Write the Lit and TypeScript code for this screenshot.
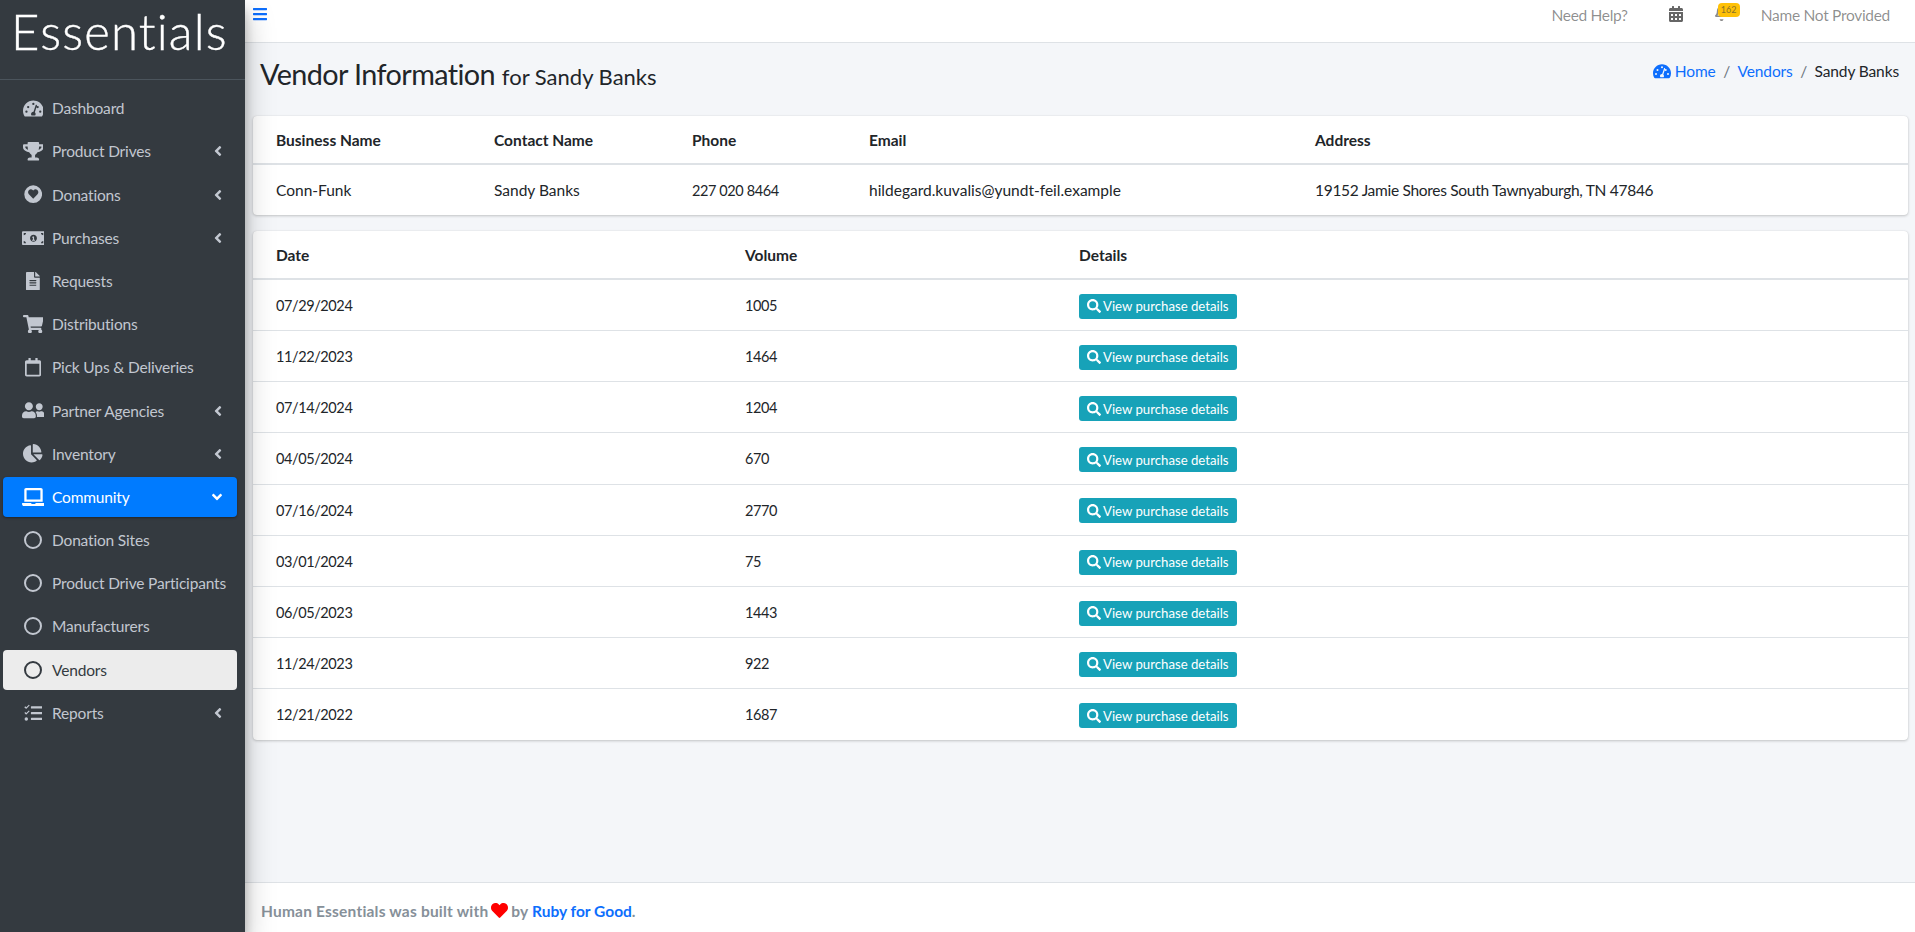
import { LitElement, html, css, svg } from "lit";
import { customElement } from "lit/decorators.js";

const icons: Record<string, any> = {
  gauge: svg`<path fill-rule="evenodd" d="M288 40C129 40 0 169 0 328c0 53 14 102 39 145 6 10 17 15 28 15h442c11 0 22-5 28-15 25-43 39-92 39-145C576 169 447 40 288 40zm0 64a32 32 0 1 1 0 64 32 32 0 0 1 0-64zM96 384a32 32 0 1 1 0-64 32 32 0 0 1 0 64zm48-128a32 32 0 1 1 0-64 32 32 0 0 1 0 64zm247-72-61 184c14 13 22 30 22 50 0 15-5 28-13 40H237c-8-12-13-25-13-40 0-35 28-64 63-64h6l61-184c3-9 13-14 21-11 10 3 15 13 12 25h3zm17 8a32 32 0 1 1 0 64 32 32 0 0 1 0-64zm72 192a32 32 0 1 1 0-64 32 32 0 0 1 0 64z"/>`,
  trophy: svg`<path d="M552 64H448V24c0-13-11-24-24-24H152c-13 0-24 11-24 24v40H24C11 64 0 75 0 88v56c0 36 23 73 62 101 32 23 70 37 110 42 32 53 68 75 68 75v72h-48c-35 0-64 21-64 56v12c0 7 5 12 12 12h296c7 0 12-5 12-12v-12c0-35-29-56-64-56h-48v-72s36-22 68-75c40-5 78-19 110-42 39-28 62-65 62-101V88c0-13-11-24-24-24zM99 193c-24-18-35-37-35-49v-16h64c1 32 6 61 13 85-15-5-29-12-42-20zm413-49c0 17-19 34-35 49-13 8-27 15-42 20 7-24 12-53 13-85h64v16z"/>`,
  heartCircle: svg`<path fill-rule="evenodd" d="M256 8a248 248 0 1 0 0 496 248 248 0 0 0 0-496zm0 372L136 256c-32-34-30-89 6-118 31-26 78-21 106 7l8 9 9-9c28-28 75-33 106-7 35 29 37 84 6 118L256 380z"/>`,
  money: svg`<path fill-rule="evenodd" d="M608 64H32C14 64 0 78 0 96v320c0 18 14 32 32 32h576c18 0 32-14 32-32V96c0-18-14-32-32-32zM48 400v-64c35 0 64 29 64 64H48zm0-224v-64h64c0 35-29 64-64 64zm272 176c-53 0-96-43-96-96s43-96 96-96 96 43 96 96-43 96-96 96zm272 48h-64c0-35 29-64 64-64v64zm0-224c-35 0-64-29-64-64h64v64zM336 296v-80c0-4-4-8-8-8h-14c-5 0-9 1-13 4l-15 10c-4 2-5 7-2 11l9 13c2 4 7 5 11 2l0 0v48h-16c-4 0-8 4-8 8v16c0 4 4 8 8 8h64c4 0 8-4 8-8v-16c0-4-4-8-8-8h-16z"/>`,
  file: svg`<path fill-rule="evenodd" d="M224 136V0H24C11 0 0 11 0 24v464c0 13 11 24 24 24h336c13 0 24-11 24-24V160H248c-13 0-24-11-24-24zm64 236c0 7-5 12-12 12H108c-7 0-12-5-12-12v-8c0-7 5-12 12-12h168c7 0 12 5 12 12v8zm0-64c0 7-5 12-12 12H108c-7 0-12-5-12-12v-8c0-7 5-12 12-12h168c7 0 12 5 12 12v8zm0-72v8c0 7-5 12-12 12H108c-7 0-12-5-12-12v-8c0-7 5-12 12-12h168c7 0 12 5 12 12zm96-114v6H256V0h6c6 0 12 3 17 7l98 98c4 5 7 11 7 17z"/>`,
  cart: svg`<path d="M528 301l47-208c4-15-8-29-23-29H159l-9-45C148 8 138 0 127 0H24C11 0 0 11 0 24v16c0 13 11 24 24 24h70l70 343c-17 10-28 28-28 49 0 31 25 56 56 56s56-25 56-56c0-16-6-30-17-40h210c-11 10-17 24-17 40 0 31 25 56 56 56s56-25 56-56c0-22-13-41-31-50l5-24c4-15-8-29-23-29H218l-7-32h293c11 0 21-8 24-19z"/>`,
  calendarOutline: svg`<path fill-rule="evenodd" d="M400 64h-48V12c0-7-5-12-12-12h-40c-7 0-12 5-12 12v52H160V12c0-7-5-12-12-12h-40c-7 0-12 5-12 12v52H48C21 64 0 85 0 112v352c0 27 21 48 48 48h352c27 0 48-21 48-48V112c0-27-21-48-48-48zm-6 400H54c-3 0-6-3-6-6V160h352v298c0 3-3 6-6 6z"/>`,
  users: svg`<path d="M192 256c62 0 112-50 112-112S254 32 192 32 80 82 80 144s50 112 112 112zm77 32h-8c-21 10-44 16-69 16s-48-6-69-16h-8C52 288 0 340 0 403v29c0 27 22 48 48 48h288c27 0 48-21 48-48v-29c0-63-52-115-115-115zM480 256c53 0 96-43 96-96s-43-96-96-96-96 43-96 96 43 96 96 96zm48 32h-4c-14 5-29 8-44 8s-30-3-44-8h-4c-20 0-39 6-56 15 24 27 40 62 40 100v38c0 3-1 5-1 7h177c27 0 48-21 48-48 0-62-50-112-112-112z"/>`,
  pie: svg`<path d="M528 288H290l158 158c6 6 16 7 22 1 39-37 66-86 73-141 2-10-6-18-15-18zm-16-65C504 104 408 8 289 0c-9-1-17 7-17 16v224h224c9 0 17-8 16-17zM224 288V51c0-10-8-18-18-16C87 51-4 156 0 280c5 129 115 234 243 232 50-1 97-17 135-44 8-6 9-17 2-24L224 288z"/>`,
  laptop: svg`<path fill-rule="evenodd" d="M624 416H381c-1 20-15 32-33 32h-60c-19 0-33-18-33-32H16c-9 0-16 7-16 16v16c0 35 29 64 64 64h512c35 0 64-29 64-64v-16c0-9-7-16-16-16zM576 48c0-26-22-48-48-48H112C86 0 64 22 64 48v336h512V48zm-64 272H128V64h384v256z"/>`,
  tasks: svg`<path d="M139 25c-3-3-8-3-11 0L64 89 41 67c-3-3-8-3-11 0L14 83c-3 3-3 8 0 11l40 40c3 3 8 3 11 0l16-16 75-75c3-3 3-8 0-11l-17-7zm0 160c-3-3-8-3-11 0l-64 64-23-22c-3-3-8-3-11 0l-16 16c-3 3-3 8 0 11l40 40c3 3 8 3 11 0l16-16 75-75c3-3 3-8 0-11l-17-7zM64 368a48 48 0 1 0 0 96 48 48 0 0 0 0-96zm432 16H208c-9 0-16 7-16 16v32c0 9 7 16 16 16h288c9 0 16-7 16-16v-32c0-9-7-16-16-16zm0-320H208c-9 0-16 7-16 16v32c0 9 7 16 16 16h288c9 0 16-7 16-16V80c0-9-7-16-16-16zm0 160H208c-9 0-16 7-16 16v32c0 9 7 16 16 16h288c9 0 16-7 16-16v-32c0-9-7-16-16-16z"/>`,
  calendarFull: svg`<path fill-rule="evenodd" d="M0 464c0 27 21 48 48 48h352c27 0 48-21 48-48V192H0v272zm320-196c0-7 5-12 12-12h40c7 0 12 5 12 12v40c0 7-5 12-12 12h-40c-7 0-12-5-12-12v-40zm0 128c0-7 5-12 12-12h40c7 0 12 5 12 12v40c0 7-5 12-12 12h-40c-7 0-12-5-12-12v-40zM192 268c0-7 5-12 12-12h40c7 0 12 5 12 12v40c0 7-5 12-12 12h-40c-7 0-12-5-12-12v-40zm0 128c0-7 5-12 12-12h40c7 0 12 5 12 12v40c0 7-5 12-12 12h-40c-7 0-12-5-12-12v-40zM64 268c0-7 5-12 12-12h40c7 0 12 5 12 12v40c0 7-5 12-12 12H76c-7 0-12-5-12-12v-40zm0 128c0-7 5-12 12-12h40c7 0 12 5 12 12v40c0 7-5 12-12 12H76c-7 0-12-5-12-12v-40zM400 64h-48V16c0-9-7-16-16-16h-32c-9 0-16 7-16 16v48H160V16c0-9-7-16-16-16h-32c-9 0-16 7-16 16v48H48C21 64 0 85 0 112v48h448v-48c0-27-21-48-48-48z"/>`,
  bell: svg`<path fill-rule="evenodd" d="M439 319c-19-21-55-52-55-154 0-77-54-139-127-155V0h-66v10C118 26 64 88 64 165c0 102-36 133-55 154-6 6-9 13-9 21 0 16 13 32 32 32h384c19 0 32-16 32-32 0-8-3-15-9-21zM85 324c21-28 44-74 44-158v-1c0-62 50-112 95-112s95 50 95 112v1c0 84 23 130 44 158H85zM224 512c35 0 64-29 64-64H160c0 35 29 64 64 64z"/>`,
  search: svg`<path d="M505 443 405 343c-4-4-10-7-17-7h-16c28-35 44-80 44-128C416 93 323 0 208 0S0 93 0 208s93 208 208 208c48 0 93-16 128-44v16c0 7 3 13 7 17l100 100c9 9 24 9 34 0l28-28c9-10 9-25 0-34zM208 336a128 128 0 1 1 0-256 128 128 0 0 1 0 256z"/>`,
  heart: svg`<path d="M462 32c-55-46-136-38-186 14l-20 21-20-21C186-6 105-14 50 32-13 86-16 182 40 240l193 199c13 13 33 13 46 0l193-199c56-58 53-154-10-208z"/>`,
  bars: svg`<path d="M16 132h416c9 0 16-7 16-16V76c0-9-7-16-16-16H16C7 60 0 67 0 76v40c0 9 7 16 16 16zm0 160h416c9 0 16-7 16-16v-40c0-9-7-16-16-16H16c-9 0-16 7-16 16v40c0 9 7 16 16 16zm0 160h416c9 0 16-7 16-16v-40c0-9-7-16-16-16H16c-9 0-16 7-16 16v40c0 9 7 16 16 16z"/>`,
  angleLeft: svg`<path d="M31 239 167 103c9-9 24-9 34 0l23 23c9 9 9 24 0 34l-97 96 97 96c9 9 9 24 0 34l-23 23c-9 9-24 9-34 0L31 273c-9-10-9-25 0-34z"/>`,
  angleDown: svg`<path d="M143 352 7 216c-9-9-9-24 0-34l23-23c9-9 24-9 34 0l96 97 96-97c9-9 24-9 34 0l23 23c9 9 9 24 0 34L177 352c-9 9-24 9-34 0z"/>`,
};

const viewBoxes: Record<string, string> = {
  gauge: "0 0 576 512",
  trophy: "0 0 576 512",
  heartCircle: "0 0 512 512",
  money: "0 0 640 512",
  file: "0 0 384 512",
  cart: "0 0 576 512",
  calendarOutline: "0 0 448 512",
  users: "0 0 640 512",
  pie: "0 0 544 512",
  laptop: "0 0 640 512",
  tasks: "0 0 512 512",
  calendarFull: "0 0 448 512",
  bell: "0 0 448 512",
  search: "0 0 512 512",
  heart: "0 0 512 512",
  bars: "0 0 448 512",
  angleLeft: "0 0 256 512",
  angleDown: "0 0 320 512",
};

const icon = (name: string, cls = "") =>
  html`<svg class="ico ${cls}" viewBox=${viewBoxes[name]} fill="currentColor">${icons[name]}</svg>`;

const menu = [
  { label: "Dashboard", icon: "gauge" },
  { label: "Product Drives", icon: "trophy", arrow: true },
  { label: "Donations", icon: "heartCircle", arrow: true },
  { label: "Purchases", icon: "money", arrow: true },
  { label: "Requests", icon: "file" },
  { label: "Distributions", icon: "cart" },
  { label: "Pick Ups & Deliveries", icon: "calendarOutline" },
  { label: "Partner Agencies", icon: "users", arrow: true },
  { label: "Inventory", icon: "pie", arrow: true },
  { label: "Community", icon: "laptop", open: true },
  { label: "Donation Sites", ring: true },
  { label: "Product Drive Participants", ring: true },
  { label: "Manufacturers", ring: true },
  { label: "Vendors", ring: true, current: true },
  { label: "Reports", icon: "tasks", arrow: true },
];

const purchases = [
  ["07/29/2024", "1005"],
  ["11/22/2023", "1464"],
  ["07/14/2024", "1204"],
  ["04/05/2024", "670"],
  ["07/16/2024", "2770"],
  ["03/01/2024", "75"],
  ["06/05/2023", "1443"],
  ["11/24/2023", "922"],
  ["12/21/2022", "1687"],
];

@customElement("app-root")
export class AppRoot extends LitElement {
  static styles = css`
    :host {
      display: grid;
      grid-template-columns: 245px 1fr;
      height: 932px;
      overflow: hidden;
      font-family: "Lato", "Liberation Sans", sans-serif;
      font-size: 15.5px;
      line-height: 24px;
      color: #212529;
    }
    a {
      color: #0d6efd;
      text-decoration: none;
    }
    .ico {
      display: block;
      height: 1em;
      flex: none;
    }

    .sidebar {
      background: #343a40;
      position: relative;
      z-index: 2;
      box-shadow: 0 14px 28px rgba(0, 0, 0, 0.25), 0 10px 10px rgba(0, 0, 0, 0.22);
    }
    .brand {
      height: 79px;
      border-bottom: 1px solid #4b545c;
      color: #fff;
      font-weight: 300;
      font-size: 49px;
      line-height: 62px;
      padding-left: 11px;
      letter-spacing: 1.2px;
      -webkit-text-stroke: 0.4px #fff;
    }
    .nav {
      list-style: none;
      margin: 8.2px 0 0;
      padding: 0 8px 0 3px;
    }
    .nav li {
      height: 40px;
      margin-bottom: 3.2px;
      border-radius: 4px;
      display: flex;
      align-items: center;
      padding: 0 15px 0 20px;
      color: #c2c7d0;
      white-space: nowrap;
      letter-spacing: -0.17px;
    }
    .nav li.open {
      background: #007bff;
      color: #fff;
      box-shadow: 0 1px 3px rgba(0, 0, 0, 0.12), 0 1px 2px rgba(0, 0, 0, 0.24);
    }
    .nav li.current {
      background: #ececec;
      color: #343a40;
    }
    .slot {
      flex: none;
      width: 24px;
      margin-left: -2px;
      margin-right: 7px;
      display: flex;
      justify-content: center;
      font-size: 18.4px;
    }
    .ring {
      width: 18px;
      height: 18px;
      box-sizing: border-box;
      border: 2px solid currentColor;
      border-radius: 50%;
    }
    .label {
      flex: 1;
    }
    .arrow {
      font-size: 16px;
    }

    .main {
      display: flex;
      flex-direction: column;
      background: #f4f6f9;
      min-width: 0;
    }
    .topbar {
      height: 43px;
      box-sizing: border-box;
      flex: none;
      background: #fff;
      border-bottom: 1px solid #dee2e6;
      display: flex;
      align-items: flex-start;
      padding: 3px 25px 0 8px;
      color: rgba(0, 0, 0, 0.45);
      letter-spacing: -0.3px;
    }
    .burger {
      color: #0d6efd;
      font-size: 16px;
      margin-top: 3px;
    }
    .help {
      margin-left: auto;
    }
    .cal {
      margin: 3px 0 0 41px;
      font-size: 16px;
      color: rgba(0, 0, 0, 0.6);
    }
    .bell {
      position: relative;
      margin: 3px 33px 0 32px;
      font-size: 15px;
    }
    .badge {
      position: absolute;
      top: -3px;
      left: 3px;
      width: 22px;
      height: 14px;
      background: #ffc107;
      border-radius: 4px;
      color: #8a7226;
      font-size: 9px;
      line-height: 13px;
      text-align: center;
      letter-spacing: 0;
    }

    .content {
      flex: 1;
      padding: 0 7px 0 8px;
    }
    .heading {
      display: flex;
      justify-content: space-between;
      padding: 12px 9px 0 7px;
      height: 73px;
      box-sizing: border-box;
    }
    h1 {
      margin: 0;
      font-size: 28.8px;
      font-weight: 400;
      line-height: 38px;
      letter-spacing: -0.6px;
    }
    h1 small {
      font-size: 22px;
      letter-spacing: 0;
    }
    .crumbs {
      display: flex;
      align-items: center;
      height: 31px;
      letter-spacing: -0.12px;
    }
    .crumbs .home {
      font-size: 16px;
      margin-right: 4px;
      color: #0d6efd;
    }
    .sep {
      color: #6c757d;
      padding: 0 7.5px;
    }

    .card {
      background: #fff;
      border-radius: 4px;
      box-shadow: 0 0 1px rgba(0, 0, 0, 0.125), 0 1px 3px rgba(0, 0, 0, 0.2);
      margin-bottom: 16px;
      overflow: hidden;
    }
    .row {
      display: grid;
      align-items: center;
      padding-left: 23px;
      border-top: 1px solid #dee2e6;
      height: 51.2px;
      box-sizing: border-box;
    }
    .row.head {
      font-weight: 700;
      border-top: 0;
      border-bottom: 2px solid #dee2e6;
      height: 49px;
    }
    .row.head + .row {
      border-top: 0;
      height: 50px;
    }
    .vendor {
      grid-template-columns: 218px 198px 177px 446px 1fr;
    }
    .purchases {
      grid-template-columns: 469px 334px 1fr;
    }
    .num {
      font-size: 14.5px;
      letter-spacing: -0.4px;
      margin-top: 2px;
    }
    .addr {
      letter-spacing: -0.3px;
    }
    .btn {
      display: inline-flex;
      align-items: center;
      gap: 2px;
      height: 25px;
      width: 158px;
      margin-top: 3px;
      box-sizing: border-box;
      padding-left: 8px;
      background: #17a2b8;
      color: #fff;
      border-radius: 3px;
      font-size: 13.2px;
      white-space: nowrap;
    }
    .btn .ico {
      font-size: 14px;
    }

    .footer {
      height: 50px;
      flex: none;
      box-sizing: border-box;
      background: #fff;
      border-top: 1px solid #dee2e6;
      padding: 6px 8px 0 16px;
      color: #869099;
      font-weight: 700;
      display: flex;
      align-items: center;
      white-space: pre;
      letter-spacing: 0.2px;
    }
    .footer a {
      letter-spacing: 0;
    }
    .heart {
      color: #f00;
      font-size: 17px;
      margin: 1px 3px 0 3px;
    }
  `;

  render() {
    return html`
      <aside class="sidebar">
        <div class="brand">Essentials</div>
        <ul class="nav">
          ${menu.map(
            (m) => html`<li class="${m.open ? "open" : ""} ${m.current ? "current" : ""}">
              <span class="slot">${m.ring ? html`<span class="ring"></span>` : icon(m.icon!)}</span>
              <span class="label">${m.label}</span>
              ${m.arrow ? icon("angleLeft", "arrow") : ""}
              ${m.open ? icon("angleDown", "arrow") : ""}
            </li>`
          )}
        </ul>
      </aside>
      <div class="main">
        <header class="topbar">
          <span class="burger">${icon("bars")}</span>
          <span class="help">Need Help?</span>
          <span class="cal">${icon("calendarFull")}</span>
          <span class="bell">${icon("bell")}<span class="badge">162</span></span>
          <span>Name Not Provided</span>
        </header>
        <main class="content">
          <div class="heading">
            <h1>Vendor Information <small>for Sandy Banks</small></h1>
            <nav class="crumbs">
              <span class="home">${icon("gauge")}</span>
              <a href="#">Home</a><span class="sep">/</span>
              <a href="#">Vendors</a><span class="sep">/</span>
              <span>Sandy Banks</span>
            </nav>
          </div>
          <section class="card">
            <div class="row head vendor">
              <span>Business Name</span><span>Contact Name</span><span>Phone</span><span>Email</span><span>Address</span>
            </div>
            <div class="row vendor">
              <span>Conn-Funk</span><span>Sandy Banks</span><span class="num">227 020 8464</span>
              <span>hildegard.kuvalis@yundt-feil.example</span>
              <span class="addr">19152 Jamie Shores South Tawnyaburgh, TN 47846</span>
            </div>
          </section>
          <section class="card">
            <div class="row head purchases"><span>Date</span><span>Volume</span><span>Details</span></div>
            ${purchases.map(
              ([date, volume]) => html`<div class="row purchases">
                <span class="num">${date}</span><span class="num">${volume}</span>
                <span><a class="btn" href="#">${icon("search")}View purchase details</a></span>
              </div>`
            )}
          </section>
        </main>
        <footer class="footer">Human Essentials was built with<span class="heart">${icon("heart")}</span>by <a href="#">Ruby for Good</a>.</footer>
      </div>
    `;
  }
}
